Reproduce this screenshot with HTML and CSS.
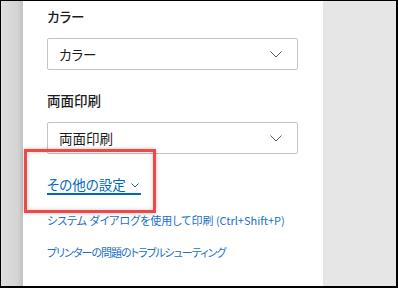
FILE: index.html
```html
<!DOCTYPE html>
<html lang="ja">
<head>
<meta charset="utf-8">
<link rel="stylesheet" href="styles.css">
</head>
<body>
<div class="frame">
  <div class="left-pane"></div>
  <div class="main">
    <div class="label">カラー</div>
    <div class="select">
      <span>カラー</span>
      <svg class="chev" width="12" height="7" viewBox="0 0 12 7"><path d="M0.5 0.5 L6 6 L11.5 0.5" fill="none" stroke="#5a5a5a" stroke-width="1"/></svg>
    </div>
    <div class="label label2">両面印刷</div>
    <div class="select">
      <span>両面印刷</span>
      <svg class="chev" width="12" height="7" viewBox="0 0 12 7"><path d="M0.5 0.5 L6 6 L11.5 0.5" fill="none" stroke="#5a5a5a" stroke-width="1"/></svg>
    </div>
    <div class="more-row">
      <span class="more">その他の設定<svg class="chev-small" width="8" height="5" viewBox="0 0 8 5"><path d="M0.5 0.5 L4 4 L7.5 0.5" fill="none" stroke="#0067c0" stroke-width="1"/></svg></span>
    </div>
    <div class="link link-sys">システム ダイアログを使用して印刷 (Ctrl+Shift+P)</div>
    <div class="link link-trouble">プリンターの問題のトラブルシューティング</div>
    <div class="highlight"></div>
  </div>
  <div class="right-pane"></div>
</div>
</body>
</html>
```
FILE: styles.css
```css
html, body {
  margin: 0;
  padding: 0;
  background: #000;
}
body {
  width: 398px;
  height: 288px;
  overflow: hidden;
  font-family: "Noto Sans CJK JP", "Noto Sans", sans-serif;
  font-feature-settings: "palt";
}
.frame {
  box-sizing: border-box;
  width: 398px;
  height: 288px;
  border-style: solid;
  border-color: #000;
  border-width: 1px 2px 2px 1px;
  display: flex;
}
.left-pane {
  width: 22px;
  background: linear-gradient(to right, #dedede, #d4d4d4 75%, #c2c2c2);
}
.main {
  position: relative;
  width: 300px;
  background: #fff;
  padding: 5px 0 0 24px;
  box-sizing: border-box;
  display: flex;
  flex-direction: column;
}
.right-pane {
  flex: 1;
  background: #e6e6e6;
}
.label {
  font-size: 13.5px;
  line-height: 20px;
  font-weight: 500;
  color: #1b1b1b;
  height: 20px;
}
.label2 {
  margin-top: 20px;
}
.select {
  margin-top: 12px;
  box-sizing: border-box;
  width: 251px;
  height: 32px;
  border: 1px solid #c4c4c4;
  border-radius: 2px;
  display: flex;
  align-items: center;
  justify-content: space-between;
  padding: 0 15px 0 11px;
  font-size: 13.5px;
  color: #1b1b1b;
}
.chev {
  display: block;
}
.more-row {
  margin-top: 21px;
  height: 20px;
  display: flex;
}
.more {
  font-size: 13.5px;
  line-height: 18px;
  color: #0067c0;
  border-bottom: 2px solid #0067c0;
  display: flex;
  align-items: center;
  padding-right: 2px;
}
.chev-small {
  margin-left: 5px;
  margin-top: 2px;
}
.link {
  font-size: 11px;
  line-height: 16px;
  color: #1a6fc9;
}
.link-sys {
  margin-top: 17px;
}
.link-trouble {
  margin-top: 16px;
  letter-spacing: -1px;
}
.highlight {
  position: absolute;
  left: 1px;
  top: 148px;
  width: 132px;
  height: 64px;
  box-sizing: border-box;
  border: 3px solid #f04848;
  box-shadow: 0 0 4px rgba(0,0,0,0.25), inset 0 0 4px rgba(0,0,0,0.2);
}
```
